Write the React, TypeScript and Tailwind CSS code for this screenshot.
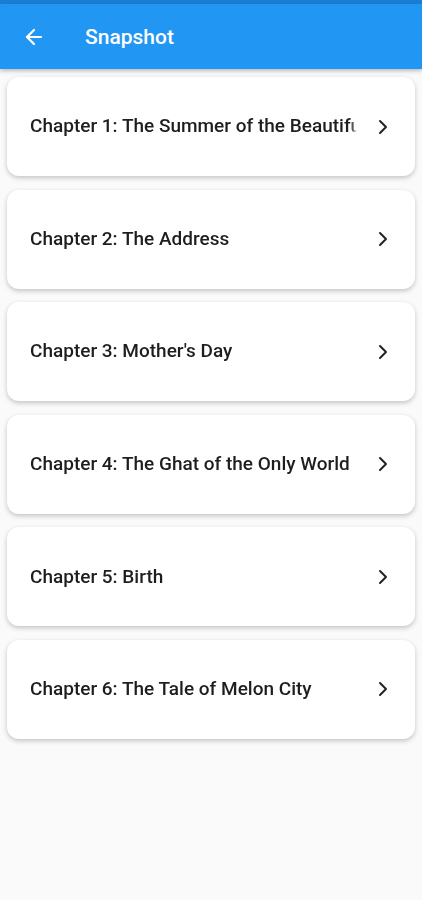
import { ArrowLeft, ChevronRight } from 'lucide-react'

const chapters = [
  'Chapter 1: The Summer of the Beautiful White Horse',
  'Chapter 2: The Address',
  "Chapter 3: Mother's Day",
  'Chapter 4: The Ghat of the Only World',
  'Chapter 5: Birth',
  'Chapter 6: The Tale of Melon City',
]

export default function App() {
  return (
    <div className="min-h-[900px] bg-[#fafafa] font-['Roboto',sans-serif]">
      <div className="h-[4px] bg-[#1a7fd4]" />
      <header className="h-[65px] bg-[#2196f3] flex items-center shadow-[0_2px_4px_rgba(0,0,0,0.25)]">
        <button className="ml-[22px] w-[24px] h-[24px] flex items-center justify-center text-white">
          <ArrowLeft size={24} strokeWidth={2.2} />
        </button>
        <h1 className="ml-[39px] mt-[2px] text-white text-[21px] font-medium">Snapshot</h1>
      </header>

      <main className="pt-[8px] px-[7px] flex flex-col gap-[13.6px]">
        {chapters.map(c => (
          <div
            key={c}
            className="h-[99px] bg-white rounded-[12px] shadow-[0_2px_5px_rgba(0,0,0,0.22)] flex items-center pl-[23px] pr-[20px]"
          >
            <p className="flex-1 min-w-0 whitespace-nowrap overflow-hidden text-[19px] font-medium text-[#1e1e1e] [mask-image:linear-gradient(to_right,black_calc(100%-6px),transparent)]">
              {c}
            </p>
            <ChevronRight size={24} strokeWidth={2} className="ml-[14px] text-[#222] shrink-0" />
          </div>
        ))}
      </main>
    </div>
  )
}
